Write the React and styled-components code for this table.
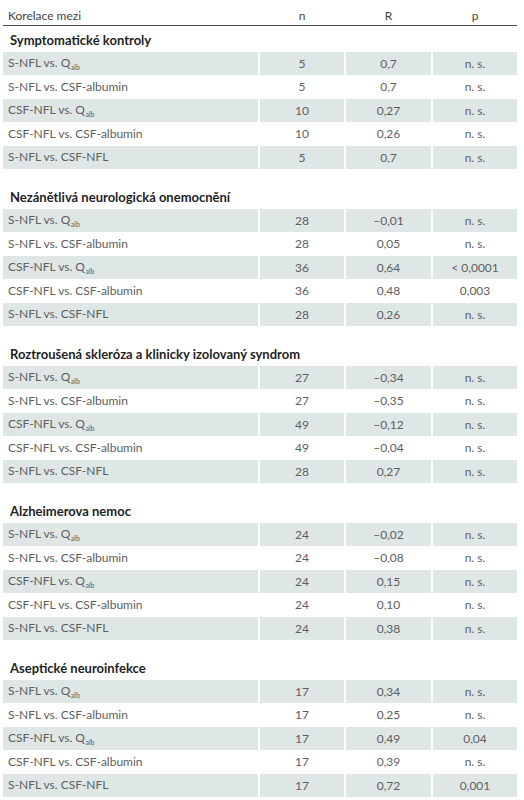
import React from "react";
import styled, { createGlobalStyle } from "styled-components";

const Global = createGlobalStyle`
  html, body { margin: 0; padding: 0; background: #fff; }
  body { font-family: Lato, "Open Sans", "Liberation Sans", sans-serif; }
`;

const Page = styled.div`
  width: 514px;
  margin-left: 3px;
  display: flex;
  flex-direction: column;
`;

const Grid = styled.div`
  display: grid;
  grid-template-columns: 255px 84px 85px 84px;
  column-gap: 2px;
`;

const HeaderRow = styled(Grid)`
  align-items: end;
  border-bottom: 1.5px solid #4a4a4a;
  padding-bottom: 2px;
  box-sizing: border-box;
  height: 26px;
`;

const HeadCell = styled.div`
  font-size: 12px;
  color: #444;
  text-align: ${(p) => (p.$left ? "left" : "center")};
  padding-left: ${(p) => (p.$left ? "5px" : "0")};
  line-height: 14px;
`;

const Section = styled.section`
  display: flex;
  flex-direction: column;
  gap: 1px;
  margin-top: ${(p) => (p.$first ? "3px" : "17.5px")};
`;

const Title = styled.div`
  height: 22px;
  display: flex;
  align-items: center;
  padding-left: 7px;
  font-weight: 700;
  font-size: 13px;
  color: #1f1f1f;
`;

const Row = styled(Grid)`
  height: 22.5px;
`;

const Cell = styled.div`
  background: ${(p) => (p.$shaded ? "#dfe6e6" : "transparent")};
  display: flex;
  align-items: center;
  justify-content: ${(p) => (p.$left ? "flex-start" : "center")};
  padding-left: ${(p) => (p.$left ? "5px" : "0")};
  font-size: 12px;
  color: #5e5e5e;
  white-space: nowrap;
`;

const Label = styled.span`
  line-height: 14px;
`;

const Sub = styled.sub`
  font-size: 7px;
  line-height: 0;
  vertical-align: -3px;
  margin-left: 0.5px;
`;

const Q = () => (
  <>
    Q<Sub>alb</Sub>
  </>
);

const labels = [
  <>S-NFL vs. <Q /></>,
  <>S-NFL vs. CSF-albumin</>,
  <>CSF-NFL vs. <Q /></>,
  <>CSF-NFL vs. CSF-albumin</>,
  <>S-NFL vs. CSF-NFL</>,
];

const data = [
  {
    title: "Symptomatické kontroly",
    rows: [
      ["5", "0,7", "n. s."],
      ["5", "0,7", "n. s."],
      ["10", "0,27", "n. s."],
      ["10", "0,26", "n. s."],
      ["5", "0,7", "n. s."],
    ],
  },
  {
    title: "Nezánětlivá neurologická onemocnění",
    rows: [
      ["28", "–0,01", "n. s."],
      ["28", "0,05", "n. s."],
      ["36", "0,64", "< 0,0001"],
      ["36", "0,48", "0,003"],
      ["28", "0,26", "n. s."],
    ],
  },
  {
    title: "Roztroušená skleróza a klinicky izolovaný syndrom",
    rows: [
      ["27", "–0,34", "n. s."],
      ["27", "–0,35", "n. s."],
      ["49", "–0,12", "n. s."],
      ["49", "–0,04", "n. s."],
      ["28", "0,27", "n. s."],
    ],
  },
  {
    title: "Alzheimerova nemoc",
    rows: [
      ["24", "–0,02", "n. s."],
      ["24", "–0,08", "n. s."],
      ["24", "0,15", "n. s."],
      ["24", "0,10", "n. s."],
      ["24", "0,38", "n. s."],
    ],
  },
  {
    title: "Aseptické neuroinfekce",
    rows: [
      ["17", "0,34", "n. s."],
      ["17", "0,25", "n. s."],
      ["17", "0,49", "0,04"],
      ["17", "0,39", "n. s."],
      ["17", "0,72", "0,001"],
    ],
  },
];

export default function App() {
  return (
    <>
      <Global />
      <Page>
        <HeaderRow>
          <HeadCell $left>Korelace mezi</HeadCell>
          <HeadCell>n</HeadCell>
          <HeadCell>R</HeadCell>
          <HeadCell>p</HeadCell>
        </HeaderRow>
        {data.map((s, si) => (
          <Section key={si} $first={si === 0}>
            <Title>{s.title}</Title>
            {s.rows.map((r, ri) => {
              const shaded = ri % 2 === 0;
              return (
                <Row key={ri}>
                  <Cell $left $shaded={shaded}>
                    <Label>{labels[ri]}</Label>
                  </Cell>
                  <Cell $shaded={shaded}>{r[0]}</Cell>
                  <Cell $shaded={shaded}>{r[1]}</Cell>
                  <Cell $shaded={shaded}>{r[2]}</Cell>
                </Row>
              );
            })}
          </Section>
        ))}
      </Page>
    </>
  );
}
